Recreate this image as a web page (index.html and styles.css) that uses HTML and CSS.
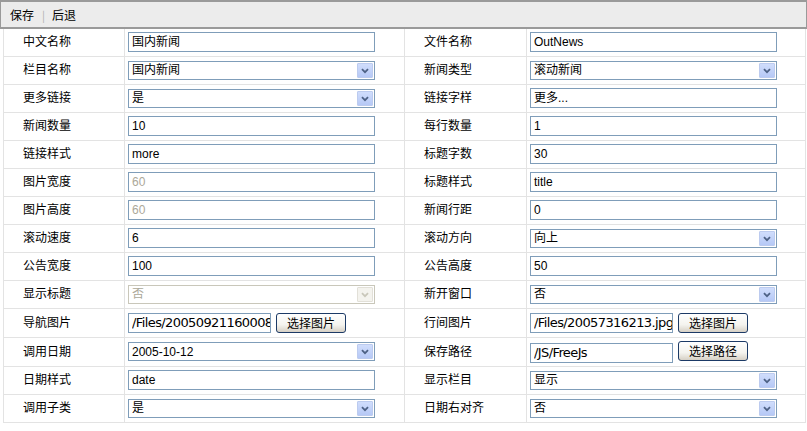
FILE: index.html
```html
<!DOCTYPE html>
<html lang="zh-CN">
<head>
<meta charset="utf-8">
<title>新闻设置</title>
<link rel="stylesheet" href="styles.css">
</head>
<body>
<div class="toolbar">
  <span class="tool">保存</span>
  <span class="sep">|</span>
  <span class="tool">后退</span>
</div>
<table class="form">
  <colgroup>
    <col class="c-label1"><col class="c-field1"><col class="c-label2"><col class="c-field2">
  </colgroup>
  <tr>
    <td class="label">中文名称</td>
    <td><span class="input">国内新闻</span></td>
    <td class="label">文件名称</td>
    <td><span class="input">OutNews</span></td>
  </tr>
  <tr>
    <td class="label">栏目名称</td>
    <td><span class="select"><span class="val">国内新闻</span><span class="arrow"><svg viewBox="0 0 15 15" width="15" height="15"><path d="M4 6 L7.5 9.5 L11 6" fill="none" stroke="#4d6185" stroke-width="2"/></svg></span></span></td>
    <td class="label">新闻类型</td>
    <td><span class="select"><span class="val">滚动新闻</span><span class="arrow"><svg viewBox="0 0 15 15" width="15" height="15"><path d="M4 6 L7.5 9.5 L11 6" fill="none" stroke="#4d6185" stroke-width="2"/></svg></span></span></td>
  </tr>
  <tr>
    <td class="label">更多链接</td>
    <td><span class="select"><span class="val">是</span><span class="arrow"><svg viewBox="0 0 15 15" width="15" height="15"><path d="M4 6 L7.5 9.5 L11 6" fill="none" stroke="#4d6185" stroke-width="2"/></svg></span></span></td>
    <td class="label">链接字样</td>
    <td><span class="input">更多...</span></td>
  </tr>
  <tr>
    <td class="label">新闻数量</td>
    <td><span class="input">10</span></td>
    <td class="label">每行数量</td>
    <td><span class="input">1</span></td>
  </tr>
  <tr>
    <td class="label">链接样式</td>
    <td><span class="input">more</span></td>
    <td class="label">标题字数</td>
    <td><span class="input">30</span></td>
  </tr>
  <tr>
    <td class="label">图片宽度</td>
    <td><span class="input disabled">60</span></td>
    <td class="label">标题样式</td>
    <td><span class="input">title</span></td>
  </tr>
  <tr>
    <td class="label">图片高度</td>
    <td><span class="input disabled">60</span></td>
    <td class="label">新闻行距</td>
    <td><span class="input">0</span></td>
  </tr>
  <tr>
    <td class="label">滚动速度</td>
    <td><span class="input">6</span></td>
    <td class="label">滚动方向</td>
    <td><span class="select"><span class="val">向上</span><span class="arrow"><svg viewBox="0 0 15 15" width="15" height="15"><path d="M4 6 L7.5 9.5 L11 6" fill="none" stroke="#4d6185" stroke-width="2"/></svg></span></span></td>
  </tr>
  <tr>
    <td class="label">公告宽度</td>
    <td><span class="input">100</span></td>
    <td class="label">公告高度</td>
    <td><span class="input">50</span></td>
  </tr>
  <tr>
    <td class="label">显示标题</td>
    <td><span class="select disabled"><span class="val">否</span><span class="arrow"><svg viewBox="0 0 15 15" width="15" height="15"><path d="M4 6 L7.5 9.5 L11 6" fill="none" stroke="#c9c7ba" stroke-width="2"/></svg></span></span></td>
    <td class="label">新开窗口</td>
    <td><span class="select"><span class="val">否</span><span class="arrow"><svg viewBox="0 0 15 15" width="15" height="15"><path d="M4 6 L7.5 9.5 L11 6" fill="none" stroke="#4d6185" stroke-width="2"/></svg></span></span></td>
  </tr>
  <tr class="tall">
    <td class="label">导航图片</td>
    <td><div class="combo"><input class="input short path" type="text" readonly value="/Files/20050921160008.jpg"><span class="btn">选择图片</span></div></td>
    <td class="label">行间图片</td>
    <td><div class="combo"><input class="input short path" type="text" readonly value="/Files/20057316213.jpg"><span class="btn">选择图片</span></div></td>
  </tr>
  <tr class="tall">
    <td class="label">调用日期</td>
    <td><span class="select"><span class="val">2005-10-12</span><span class="arrow"><svg viewBox="0 0 15 15" width="15" height="15"><path d="M4 6 L7.5 9.5 L11 6" fill="none" stroke="#4d6185" stroke-width="2"/></svg></span></span></td>
    <td class="label">保存路径</td>
    <td><div class="combo"><input class="input short path low" type="text" readonly value="/JS/FreeJs"><span class="btn">选择路径</span></div></td>
  </tr>
  <tr>
    <td class="label">日期样式</td>
    <td><span class="input">date</span></td>
    <td class="label">显示栏目</td>
    <td><span class="select"><span class="val">显示</span><span class="arrow"><svg viewBox="0 0 15 15" width="15" height="15"><path d="M4 6 L7.5 9.5 L11 6" fill="none" stroke="#4d6185" stroke-width="2"/></svg></span></span></td>
  </tr>
  <tr>
    <td class="label">调用子类</td>
    <td><span class="select"><span class="val">是</span><span class="arrow"><svg viewBox="0 0 15 15" width="15" height="15"><path d="M4 6 L7.5 9.5 L11 6" fill="none" stroke="#4d6185" stroke-width="2"/></svg></span></span></td>
    <td class="label">日期右对齐</td>
    <td><span class="select"><span class="val">否</span><span class="arrow"><svg viewBox="0 0 15 15" width="15" height="15"><path d="M4 6 L7.5 9.5 L11 6" fill="none" stroke="#4d6185" stroke-width="2"/></svg></span></span></td>
  </tr>
</table>
</body>
</html>
```

FILE: styles.css
```css
* { box-sizing: border-box; }

body {
  margin: 0;
  background: #ffffff;
  color: #000000;
  font-family: "Liberation Sans", "Noto Sans CJK SC", sans-serif;
  font-size: 12px;
}

.toolbar {
  width: 807px;
  height: 29px;
  border: 1px solid #9a9a9a;
  border-top-width: 2px;
  border-bottom-width: 2px;
  background: #ececec;
  display: flex;
  align-items: center;
  padding-left: 9px;
  font-family: "Noto Sans CJK SC", sans-serif;
  font-size: 12px;
}

.sep {
  color: #b0b0b0;
  margin: 0 7px 0 8px;
  font-size: 11px;
}

.form {
  margin-left: 3px;
  width: 802px;
  border-collapse: collapse;
  table-layout: fixed;
}

.c-label1 { width: 121px; }
.c-field1 { width: 280px; }
.c-label2 { width: 122px; }
.c-field2 { width: 279px; }

.form td {
  border: 1px solid #e3e3e3;
  height: 28px;
  padding: 0 0 0 3px;
  vertical-align: middle;
}

.form tr:first-child td { border-top: none; height: 27px; }

.form tr.tall td { height: 29px; }

.form td.label {
  padding-left: 19px;
  font-family: "Noto Sans CJK SC", sans-serif;
  font-size: 12px;
  line-height: 14px;
  padding-bottom: 2px;
}

.input {
  display: block;
  width: 247px;
  height: 20px;
  margin: 0;
  border: 1px solid #7f9db9;
  border-radius: 0;
  background: #ffffff;
  color: #000000;
  padding: 0 0 0 3px;
  line-height: 18px;
  white-space: nowrap;
  overflow: hidden;
  font-family: "Liberation Sans", "Noto Sans CJK SC", sans-serif;
  font-size: 12px;
  outline: none;
}

.input.disabled {
  color: #aca899;
}

.input.short {
  width: 143px;
}

.input.path {
  font-size: 13px;
  font-family: "DejaVu Sans", "Noto Sans CJK SC", sans-serif;
  letter-spacing: -0.6px;
}

.input.low {
  margin-top: 2px;
}

.combo {
  display: flex;
  align-items: flex-start;
  gap: 5px;
}

.btn {
  display: block;
  width: 70px;
  height: 20px;
  border: 1px solid #1c3a66;
  border-radius: 3px;
  background: linear-gradient(#ffffff, #f4f3ee 60%, #d6d0c5);
  text-align: center;
  line-height: 17px;
  font-family: "Noto Sans CJK SC", sans-serif;
  font-size: 12px;
}

.select {
  display: flex;
  align-items: center;
  width: 247px;
  height: 19px;
  border: 1px solid #7f9db9;
  background: #ffffff;
  padding: 0 1px 0 3px;
}

.select .val {
  flex: 1;
  line-height: 16px;
  font-family: "Liberation Sans", "Noto Sans CJK SC", sans-serif;
  font-size: 12px;
  white-space: nowrap;
}

.select .arrow {
  display: block;
  width: 16px;
  height: 15px;
  background: linear-gradient(#d0ddfc, #b6c9f6);
  border: 1px solid #bccbef;
  border-radius: 1px;
}

.select .arrow svg {
  display: block;
  width: 14px;
  height: 13px;
}

.select.disabled {
  border-color: #c9c7ba;
  color: #aca899;
}

.select.disabled .arrow {
  background: #f4f3ee;
  border-color: #e2e0d8;
}
```
